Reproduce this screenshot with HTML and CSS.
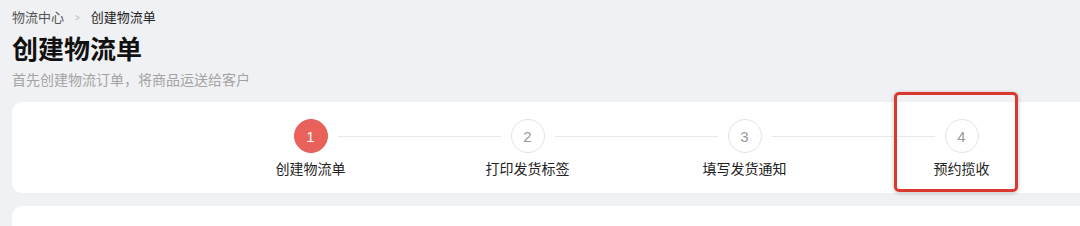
FILE: index.html
```html
<!DOCTYPE html>
<html lang="zh-CN">
<head>
    <meta charset="UTF-8" />
    <title>创建物流单</title>
    <link rel="stylesheet" href="styles.css">
</head>
<body>
    <div class="page">
        <div class="breadcrumb">
            <span class="crumb">物流中心</span>
            <span class="sep">&gt;</span>
            <span class="crumb current">创建物流单</span>
        </div>
        <h1 class="title">创建物流单</h1>
        <p class="subtitle">首先创建物流订单，将商品运送给客户</p>

        <div class="card steps-card">
            <div class="steps">
                <div class="step active">
                    <div class="dot">1</div>
                    <div class="label">创建物流单</div>
                </div>
                <div class="step">
                    <div class="dot">2</div>
                    <div class="label">打印发货标签</div>
                </div>
                <div class="step">
                    <div class="dot">3</div>
                    <div class="label">填写发货通知</div>
                </div>
                <div class="step last">
                    <div class="dot">4</div>
                    <div class="label">预约揽收</div>
                </div>
            </div>
        </div>

        <div class="card form-card"></div>
    </div>

    <!-- annotation highlight -->
    <div class="highlight"></div>
</body>
</html>
```

FILE: styles.css
```css
body {
    margin: 0;
    padding: 0;
    height: 226px;
    background: #f0f1f4;
    font-family: "Noto Sans CJK SC", "Noto Sans", sans-serif;
    overflow: hidden;
}

.page {
    padding: 7px 0 0 12px;
}

.breadcrumb {
    display: flex;
    align-items: center;
    font-size: 13px;
    line-height: 20px;
    color: #555;
}

.sep {
    margin: 0 10px;
    color: #bbb;
    font-size: 12px;
    transform: scaleX(0.7);
}

.crumb.current {
    color: #222;
}

.title {
    margin: 4px 0 0;
    font-size: 26px;
    line-height: 34px;
    font-weight: 700;
    color: #111;
}

.subtitle {
    margin: 4px 0 0;
    font-size: 14px;
    line-height: 20px;
    color: #a3a3a3;
}

.card {
    background: #fff;
    border-radius: 10px;
    margin-right: -30px;
}

.steps-card {
    margin-top: 13px;
    height: 91px;
    box-sizing: border-box;
    padding: 17px 0 0 190px;
}

.steps {
    display: flex;
}

.step {
    width: 217px;
    display: flex;
    flex-direction: column;
    align-items: center;
    position: relative;
}

.step::after {
    content: "";
    position: absolute;
    top: 17px;
    left: calc(50% + 27px);
    width: 163px;
    height: 1px;
    background: #e8e8e8;
}

.step.last::after {
    display: none;
}

.dot {
    width: 34px;
    height: 34px;
    box-sizing: border-box;
    border: 1px solid #e3e3e3;
    border-radius: 50%;
    display: flex;
    align-items: center;
    justify-content: center;
    font-size: 15px;
    color: #9a9a9a;
    font-family: "Liberation Sans", sans-serif;
}

.step.active .dot {
    background: #e8625b;
    border-color: #e8625b;
    color: #fff;
}

.label {
    margin-top: 5px;
    font-size: 14px;
    line-height: 20px;
    color: #222;
}

.form-card {
    margin-top: 13px;
    height: 20px;
    border-radius: 10px 10px 0 0;
}

.highlight {
    position: absolute;
    left: 894px;
    top: 92px;
    width: 118px;
    height: 94px;
    border: 3px solid #d9382e;
    border-radius: 5px;
    box-shadow: 0 1px 4px rgba(0, 0, 0, 0.25);
}
```
